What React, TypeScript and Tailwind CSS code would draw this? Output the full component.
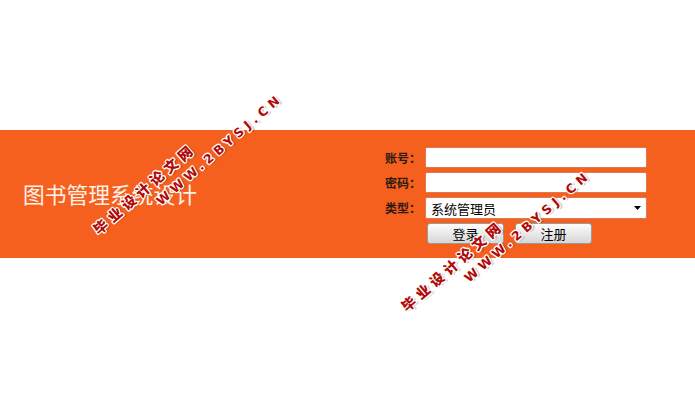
import React from "react";

const outline =
  "[text-shadow:1px_0_0_#fff,-1px_0_0_#fff,0_1px_0_#fff,0_-1px_0_#fff,1px_1px_0_#fff,-1px_-1px_0_#fff,1px_-1px_0_#fff,-1px_1px_0_#fff,2px_2px_1px_rgba(0,0,0,0.25)]";

function Watermark({ dx, dy }: { dx: number; dy: number }) {
  return (
    <>
      <div
        className={`absolute whitespace-nowrap origin-left text-[14px] leading-[14px] font-black tracking-[4.6px] text-[#b00a0a] ${outline} pointer-events-none`}
        style={{
          left: 94.5 + dx,
          top: 223.5 + dy,
          transform: "rotate(-41deg)",
          fontFamily: '"Noto Sans CJK SC", sans-serif',
        }}
      >
        毕业设计论文网
      </div>
      <div
        className={`absolute whitespace-nowrap origin-left text-[12.5px] leading-[13px] font-bold tracking-[4.4px] text-[#b00a0a] ${outline} pointer-events-none`}
        style={{
          left: 157.5 + dx,
          top: 195.5 + dy,
          transform: "rotate(-41deg)",
          fontFamily: '"DejaVu Sans", sans-serif',
        }}
      >
        WWW.2BYSJ.CN
      </div>
    </>
  );
}

function Label({ children }: { children: React.ReactNode }) {
  return (
    <div className="w-[40px] h-[21px] flex items-center text-[12px] font-bold text-[#2e1a10] leading-none">
      {children}
    </div>
  );
}

function Field() {
  return (
    <div className="w-[222px] h-[21px] bg-white border border-[#dc7a55] rounded-[2px]" />
  );
}

export default function App() {
  return (
    <div
      className="relative w-full h-[405px] bg-white overflow-hidden"
      style={{ fontFamily: '"Noto Sans CJK SC", "Liberation Sans", sans-serif' }}
    >
      <div className="pt-[130px]">
        <div className="h-[128px] bg-[#f5601f] flex items-center pl-[23px] pr-[48px]">
          <div className="text-[21.75px] leading-none text-[#fdf1e8] font-normal">
            图书管理系统设计
          </div>
          <div className="ml-auto flex flex-col gap-[4px] pt-[3px]">
            <div className="flex">
              <Label>账号：</Label>
              <Field />
            </div>
            <div className="flex">
              <Label>密码：</Label>
              <Field />
            </div>
            <div className="flex">
              <Label>类型：</Label>
              <div className="w-[222px] h-[22px] bg-white border border-[#dc7a55] rounded-[2px] flex items-center pl-[5px] pr-[5px]">
                <span className="text-[13px] text-black leading-none">系统管理员</span>
                <svg className="ml-auto" width="7" height="4" viewBox="0 0 7 4">
                  <path d="M0 0H7L3.5 4Z" fill="#000" />
                </svg>
              </div>
            </div>
            <div className="flex pl-[42px] gap-[11px]">
              <button className="w-[77px] h-[21px] rounded-[3px] border border-[#9a9a9a] bg-gradient-to-b from-[#fdfdfd] to-[#d6d6d6] text-[13px] text-black leading-none">
                登录
              </button>
              <button className="w-[77px] h-[21px] rounded-[3px] border border-[#9a9a9a] bg-gradient-to-b from-[#fdfdfd] to-[#d6d6d6] text-[13px] text-black leading-none">
                注册
              </button>
            </div>
          </div>
        </div>
      </div>
      <Watermark dx={0} dy={0} />
      <Watermark dx={308} dy={77} />
    </div>
  );
}
